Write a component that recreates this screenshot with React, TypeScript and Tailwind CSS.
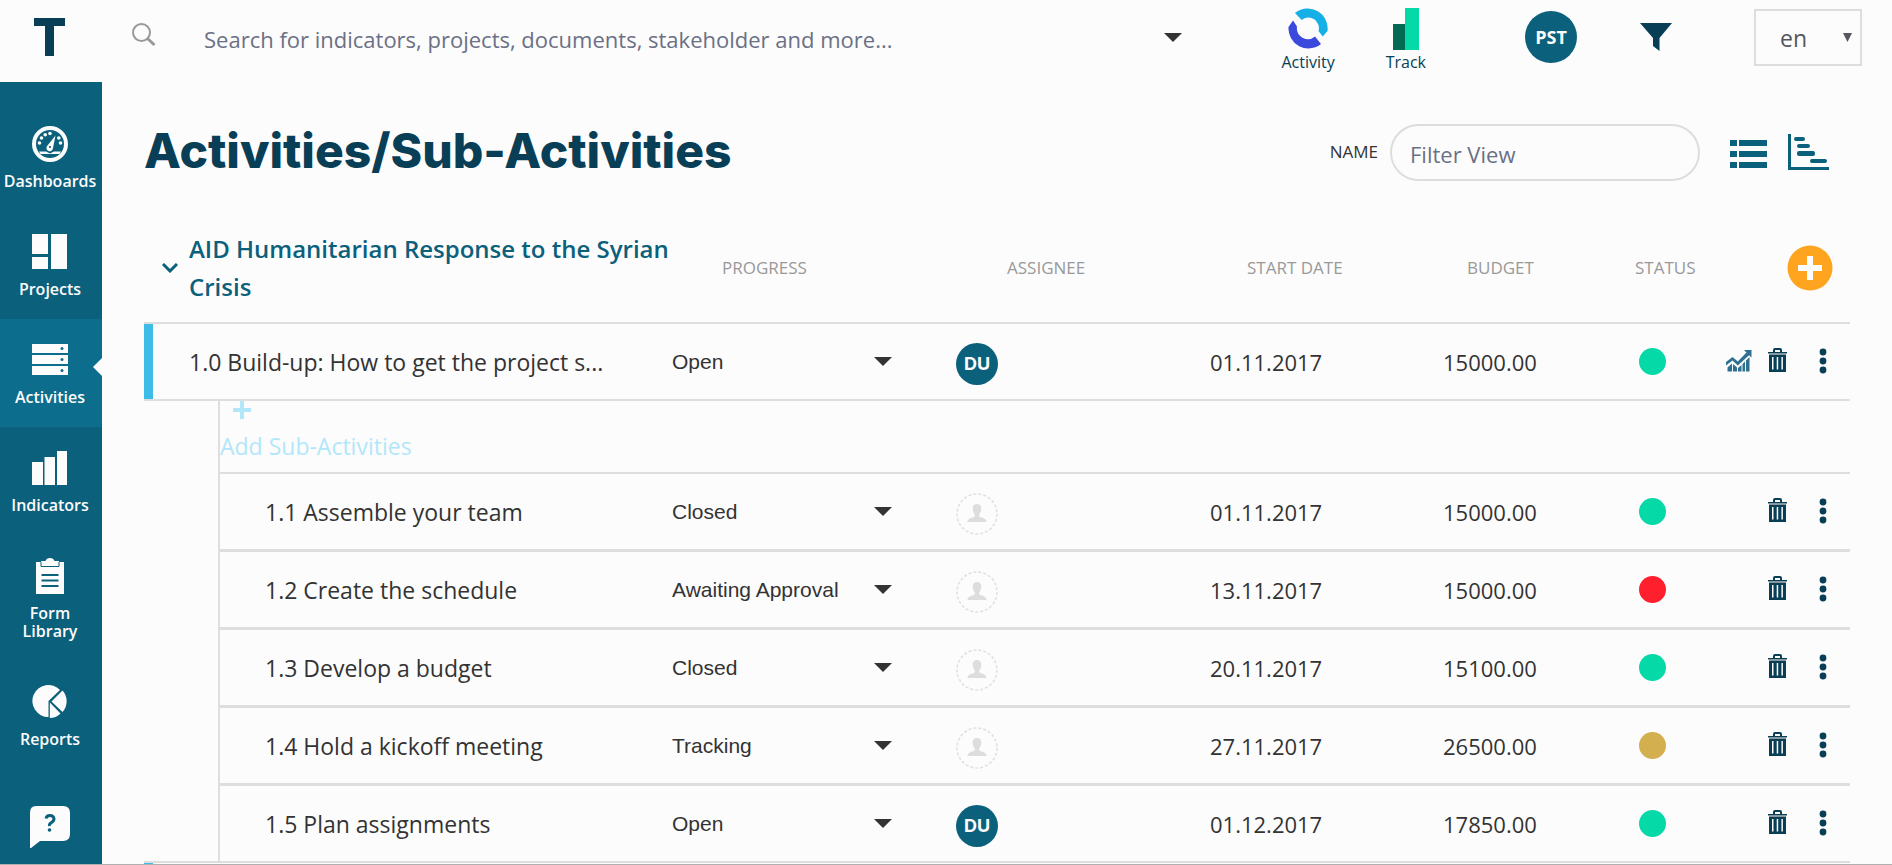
import React, { useState } from "react";

type Status = "green" | "red" | "gold";

interface Activity {
  name: string;
  progress: string;
  assignee?: string;
  date: string;
  budget: string;
  status: Status;
}

const main: Activity = {
  name: "1.0 Build-up: How to get the project s...",
  progress: "Open",
  assignee: "DU",
  date: "01.11.2017",
  budget: "15000.00",
  status: "green",
};

const subActivities: Activity[] = [
  { name: "1.1 Assemble your team", progress: "Closed", date: "01.11.2017", budget: "15000.00", status: "green" },
  { name: "1.2 Create the schedule", progress: "Awaiting Approval", date: "13.11.2017", budget: "15000.00", status: "red" },
  { name: "1.3 Develop a budget", progress: "Closed", date: "20.11.2017", budget: "15100.00", status: "green" },
  { name: "1.4 Hold a kickoff meeting", progress: "Tracking", date: "27.11.2017", budget: "26500.00", status: "gold" },
  { name: "1.5 Plan assignments", progress: "Open", assignee: "DU", date: "01.12.2017", budget: "17850.00", status: "green" },
];

const progressOptions = ["Open", "Awaiting Approval", "Tracking", "Closed"];

const statusColor: Record<Status, string> = {
  green: "bg-[#05d9a7]",
  red: "bg-[#ff1f2d]",
  gold: "bg-[#d3af50]",
};

const nav = [
  {
    label: "Dashboards",
    icon: (
      <svg width="36" height="36" viewBox="0 0 36 36">
        <circle cx="18" cy="18" r="16" fill="none" stroke="#fcfcfc" strokeWidth="4" />
        <g fill="#fcfcfc">
          <circle cx="7.5" cy="17" r="1.8" />
          <circle cx="9.5" cy="12" r="1.8" />
          <circle cx="13.2" cy="8.8" r="1.8" />
          <circle cx="18" cy="7.5" r="1.8" />
          <circle cx="26.8" cy="12" r="1.8" />
          <circle cx="28.5" cy="17" r="1.8" />
          <path d="M23.5 9.5 L21 22 A3.3 3.3 0 1 1 15.5 19.5 Z" />
          <path d="M7 25.5 H14 L18 27.5 L22 25.5 H29 L27.5 28 H8.5 Z" />
        </g>
        <circle cx="18" cy="21" r="1.1" fill="#0b607c" />
      </svg>
    ),
  },
  {
    label: "Projects",
    icon: (
      <svg width="36" height="36" viewBox="0 0 36 36" fill="#fcfcfc">
        <path d="M0 0H16V20H0zM0 23H16V35H0zM19 0H35V35H19z" />
      </svg>
    ),
  },
  {
    label: "Activities",
    icon: (
      <svg width="36" height="36" viewBox="0 0 36 36">
        <path d="M0 2H36V11H0zM0 13H36V22H0zM0 24H36V33H0z" fill="#fcfcfc" />
        <g fill="#0c6d8d">
          <circle cx="30" cy="6.5" r="1.5" />
          <circle cx="30" cy="17.5" r="1.5" />
          <circle cx="30" cy="28.5" r="1.5" />
        </g>
      </svg>
    ),
  },
  {
    label: "Indicators",
    icon: (
      <svg width="36" height="36" viewBox="0 0 36 36" fill="#fcfcfc">
        <path d="M0 12H11V35H0zM12.5 7H23V35H12.5zM25 1H35V35H25z" />
      </svg>
    ),
  },
  {
    label: "Form Library",
    icon: (
      <svg width="36" height="36" viewBox="0 0 36 36">
        <path d="M4 4H32V36H4z" fill="#fcfcfc" />
        <path d="M9 3H13.5Q14.5 0 18 0T22.5 3H27V9H9z" fill="#fcfcfc" />
        <path d="M9 4V8.5H27V4" fill="none" stroke="#0b607c" strokeWidth="1" />
        <path d="M9.5 17H26.5M9.5 22.5H26.5M9.5 28H26.5" stroke="#0b607c" strokeWidth="2" />
      </svg>
    ),
  },
  {
    label: "Reports",
    icon: (
      <svg width="36" height="36" viewBox="0 0 36 36" fill="#fcfcfc">
        <path d="M16.5 17V33A16 16 0 1 1 28 6z" />
        <path d="M19.5 17.5L30.5 6.5A16 16 0 0 1 30.5 28z" />
        <path d="M17.8 18.5L28.5 29.5Q24 34 17.8 34z" />
      </svg>
    ),
  },
];

function Caret() {
  return (
    <svg width="18" height="9" viewBox="0 0 18 9" className="pointer-events-none shrink-0">
      <path d="M0 0H18L9 9z" fill="#333" />
    </svg>
  );
}

function Avatar({ initials }: { initials?: string }) {
  if (initials) {
    return (
      <span className="mt-1 flex size-[42px] items-center justify-center rounded-full bg-[#0b607c] font-['Inter',sans-serif] text-[18px] font-bold text-[#fcfcfc]">
        {initials}
      </span>
    );
  }
  return (
    <span className="mt-1 flex size-[42px] items-center justify-center">
      <svg width="42" height="42" viewBox="0 0 42 42" fill="#dcdedd">
        <circle cx="21" cy="21" r="20" fill="none" stroke="#dfe1e0" strokeWidth="1.6" strokeDasharray="3 2" />
        <g transform="translate(11 10)">
          <path d="M10 1C13 1 14.5 3.2 14.3 6.2C14.1 9 13 10.5 12.3 11.2V13.5C15 15 19.5 15 19.5 19H.5C.5 15 5 15 7.7 13.5V11.2C7 10.5 5.9 9 5.7 6.2C5.5 3.2 7 1 10 1z" />
        </g>
      </svg>
    </span>
  );
}

function TrendIcon() {
  return (
    <svg width="26" height="26" viewBox="0 0 26 26">
      <g fill="#2f7091">
        <path d="M1.5 19.5L6 15.5V23.5H1.5zM7 16L11 19.5V23.5H7zM12 20L15.5 17V23.5H12zM16.5 16L19 13.5V23.5H16.5zM20 12.5L23.5 9V23.5H20z" />
        <path d="M18 2H25.5V9.5L23 7.2L11.800 17.5L6.5 12.5L0 17.5V14L6.5 9L11.8 13.5L20.5 4.500z" />
      </g>
    </svg>
  );
}

function TrashIcon() {
  return (
    <svg width="20" height="26" viewBox="0 0 20 26">
      <path d="M6 4V2Q6 1 7 1H12Q13 1 13 2V4" fill="none" stroke="#083f56" strokeWidth="2" />
      <path d="M0 4H19V5.5H0z" fill="#083f56" />
      <path d="M1 5.5H18V7H1z" fill="#8b979c" />
      <path d="M1 7H18V24H1z" fill="#083f56" />
      <path d="M4 9H5.5V21.5H4zM8.7 9H10.2V21.5H8.7zM13.4 9H14.9V21.5H13.4z" fill="#fcfcfc" />
    </svg>
  );
}

function Row({ item, sub }: { item: Activity; sub?: boolean }) {
  const [progress, setProgress] = useState(item.progress);
  return (
    <>
      <span className={sub ? "w-[452px] shrink-0 pt-[2px] pl-[45px]" : "w-[519px] shrink-0 pt-[2px] pl-9"}>{item.name}</span>
      <label className="relative flex w-[220px] shrink-0 items-center">
        <select
          aria-label={`Progress of ${item.name}`}
          value={progress}
          onChange={(e) => setProgress(e.target.value)}
          className="w-full appearance-none bg-transparent font-['Liberation_Sans',sans-serif] text-[21px] leading-6 outline-none"
        >
          {progressOptions.map((o) => (
            <option key={o}>{o}</option>
          ))}
        </select>
        <span className="pointer-events-none absolute right-0">
          <svg width="18" height="9" viewBox="0 0 18 9" className="block">
            <path d="M0 0H18L9 9z" fill="#333" />
          </svg>
        </span>
      </label>
      <span className="min-w-0 flex-1 pl-16">
        <Avatar initials={item.assignee} />
      </span>
      <span className="w-[233px] shrink-0 pt-[2px] text-[22px]">{item.date}</span>
      <span className="w-[196px] shrink-0 pt-[2px] text-[22px]">{item.budget}</span>
      <span className="w-[87px] shrink-0">
        <span className={`block size-[27px] rounded-full ${statusColor[item.status]}`} />
      </span>
      <span className="flex w-[124px] shrink-0 items-center pb-[2px]">
        <span className="w-[42px]">
          {!sub && (
            <button type="button" aria-label="Show trend" className="block">
              <TrendIcon />
            </button>
          )}
        </span>
        <button type="button" aria-label="Delete" className="block w-[51px]">
          <TrashIcon />
        </button>
        <button type="button" aria-label="More" className="block">
          <svg width="8" height="26" viewBox="0 0 8 26" fill="#083f56">
            <circle cx="4" cy="4" r="3.4" />
            <circle cx="4" cy="13" r="3.4" />
            <circle cx="4" cy="22" r="3.4" />
          </svg>
        </button>
      </span>
    </>
  );
}

export default function App() {
  return (
    <div className="flex h-screen flex-col overflow-hidden border-b border-[#b0b0b0] bg-[#fcfcfc] font-['Open_Sans','Noto_Sans',sans-serif] text-[23px] text-[#333]">
      <header className="flex h-[82px] shrink-0 items-center pr-[30px]">
        <a href="#home" aria-label="Home" className="flex w-[102px] justify-center pr-1 pb-2">
          <svg width="32" height="38" viewBox="0 0 32 38" fill="#083f56">
            <path d="M1 0H32V8H21V38H12V8H1z" />
          </svg>
        </a>
        <label htmlFor="search" className="ml-[30px] pb-3">
          <svg width="24" height="24" viewBox="0 0 24 24" fill="none" stroke="#999">
            <circle cx="9.5" cy="9.5" r="8.5" strokeWidth="2" />
            <path d="M15.5 15.5L22.5 22" strokeWidth="3" />
          </svg>
        </label>
        <input
          id="search"
          placeholder="Search for indicators, projects, documents, stakeholder and more..."
          className="ml-12 min-w-0 flex-1 bg-transparent pb-1 text-[22px] outline-none placeholder:text-[#6b7086]"
        />
        <button type="button" aria-label="Search options" className="mb-2">
          <Caret />
        </button>
        <nav className="ml-[99px] flex gap-[51px] text-[16px] leading-5 text-[#083f56]">
          <a href="#activity" className="flex flex-col items-center gap-[2px] pb-[2px]">
            <svg width="40" height="42" viewBox="0 0 40 42">
              <path d="M7 5A20 20 0 0 1 39.5 23L34.7 28.5L30.5 23A10.5 10.5 0 0 0 13.7 12z" fill="#14b0e6" />
              <path d="M5 12.5L9 18.5A11 11 0 0 0 27 28.5L33 36A20 20 0 0 1 .5 19z" fill="#3c49dd" />
            </svg>
            Activity
          </a>
          <a href="#track" className="flex flex-col items-center gap-[2px] pb-[2px]">
            <svg width="26" height="42" viewBox="0 0 26 42">
              <path d="M0 16H13V42H0z" fill="#036b54" />
              <path d="M12 0H26V42H12z" fill="#05d9a7" />
            </svg>
            Track
          </a>
        </nav>
        <button type="button" className="mb-2 ml-[99px] flex size-[52px] items-center justify-center rounded-full bg-[#0b607c] text-[18px] font-bold text-[#fcfcfc]">
          PST
        </button>
        <button type="button" aria-label="Filter" className="mb-2 ml-[63px]">
          <svg width="32" height="30" viewBox="0 0 32 30" fill="#083f56">
            <path d="M0 1H32L19.5 16V29L13 24V16z" />
          </svg>
        </button>
        <label className="relative mb-2 ml-[82px] flex items-center">
          <select aria-label="Language" defaultValue="en" className="h-[57px] w-[108px] appearance-none border-2 border-[#dcdedd] pt-[2px] pl-6 text-[#55565f] outline-none">
            <option>en</option>
            <option>fr</option>
          </select>
          <svg width="9" height="9" viewBox="0 0 9 9" className="pointer-events-none absolute right-[10px]">
            <path d="M0 0H9L4.5 9z" fill="#55565f" />
          </svg>
        </label>
      </header>

      <div className="flex min-h-0 flex-1">
        <nav className="flex w-[102px] shrink-0 flex-col items-center bg-[#0b607c] pt-[21px] text-[16px] leading-[18px] font-semibold text-[#fcfcfc]">
          {nav.map((n) => (
            <a
              key={n.label}
              href={`#${n.label}`}
              className={`relative flex min-h-[108px] w-full flex-col items-center gap-[10px] pt-[23px] pr-[18px] pl-4 text-center ${
                n.label === "Activities" ? "bg-[#0c6d8d]" : ""
              } ${n.label === "Form Library" ? "pb-[21px]" : ""}`}
            >
              {n.icon}
              {n.label}
              {n.label === "Activities" && (
                <svg width="9" height="18" viewBox="0 0 9 18" className="absolute top-[39px] right-0">
                  <path d="M9 0V18L0 9z" fill="#fcfcfc" />
                </svg>
              )}
            </a>
          ))}
          <button type="button" aria-label="Help" className="mt-9 mr-[2px]">
            <svg width="42" height="44" viewBox="0 0 42 44">
              <path d="M7 1H34Q41 1 41 8V29Q41 36 34 36H11L2 43H1V8Q1 1 7 1z" fill="#fcfcfc" />
              <path d="M17 13.5Q17.5 10.5 21 10.5T25 13.8Q25 16 22.5 17.5T20.5 21" fill="none" stroke="#0b607c" strokeWidth="3" />
              <circle cx="20.5" cy="25" r="1.8" fill="#0b607c" />
            </svg>
          </button>
        </nav>

        <main className="min-w-0 flex-1 pr-[42px] pl-[42px]">
          <div className="flex h-[140px] items-center pr-5">
            <h1 className="flex-1 pb-[2px] font-['Inter',sans-serif] text-[48px] leading-[56px] font-extrabold text-[#083f56]">Activities/Sub-Activities</h1>
            <label htmlFor="filter" className="mr-3 text-[17px]">
              NAME
            </label>
            <input
              id="filter"
              placeholder="Filter View"
              className="h-[57px] w-[310px] rounded-full border-2 border-[#dcdedd] bg-transparent px-[18px] pt-[3px] text-[22px] outline-none placeholder:text-[#6b7086]"
            />
            <button type="button" aria-label="List view" className="mt-[3px] ml-[30px]">
              <svg width="38" height="30" viewBox="0 0 38 30" fill="#0b607c">
                <path d="M0 1H7V7H0zM9 1H37V7H9zM0 12H7V18H0zM9 12H37V18H9zM0 23H7V29H0zM9 23H37V29H9z" />
              </svg>
            </button>
            <button type="button" aria-label="Gantt view" className="ml-5">
              <svg width="42" height="36" viewBox="0 0 42 36" fill="#0b607c">
                <path d="M0 0H3V33H41V36H0z" />
                <rect x="6" y="3" width="11" height="4" rx="2" />
                <rect x="9" y="10" width="13" height="4" rx="2" />
                <rect x="9" y="17" width="18" height="5" rx="2" />
                <rect x="22" y="25" width="17" height="4" rx="2" />
              </svg>
            </button>
          </div>

          <section>
            <div className="flex h-[100px] items-center pb-2 text-[17px] text-[#999]">
              <div className="flex w-[578px] shrink-0 items-center gap-[11px] pl-[18px]">
                <button type="button" aria-label="Collapse">
                  <svg width="16" height="10" viewBox="0 0 16 10" fill="none" stroke="#0b607c" strokeWidth="3">
                    <path d="M1 1L8 8L15 1" />
                  </svg>
                </button>
                <h2 className="w-[500px] text-[24px] leading-[38px] font-semibold text-[#0b607c]">AID Humanitarian Response to the Syrian Crisis</h2>
              </div>
              <span className="w-[285px] shrink-0">PROGRESS</span>
              <span className="min-w-0 flex-1">ASSIGNEE</span>
              <span className="w-[220px] shrink-0">START DATE</span>
              <span className="w-[168px] shrink-0">BUDGET</span>
              <span className="w-[152px] shrink-0">STATUS</span>
              <button type="button" aria-label="Add activity" className="mr-[17px]">
                <svg width="46" height="46" viewBox="0 0 46 46">
                  <circle cx="23" cy="23" r="22.5" fill="#ffa41f" />
                  <path d="M20 11H26V20H35V26H26V35H20V26H11V20H20z" fill="#fcfcfc" />
                </svg>
              </button>
            </div>

            <div className="flex h-[79px] items-center border-y-2 border-[#dedede]">
              <div className="h-full w-[9px] shrink-0 bg-[#3dbce7]" />
              <Row item={main} />
            </div>

            <div className="ml-[74px] border-l-2 border-[#dedede]">
              <button type="button" className="flex h-[71px] w-full flex-col items-start text-left text-[#b2e7fa]">
                <svg width="18" height="18" viewBox="0 0 18 18" fill="#b2e7fa" className="ml-[13px] shrink-0">
                  <path d="M7 0H11V7H18V11H11V18H7V11H0V7H7z" />
                </svg>
                <span className="mt-[7px] leading-10">Add Sub-Activities</span>
              </button>
              {subActivities.map((item, i) => (
                <div key={item.name} className={`flex items-center border-[#dedede] ${i === 0 ? "h-[77px] border-t-2" : "h-[78px] border-t-3"}`}>
                  <Row item={item} sub />
                </div>
              ))}
            </div>
            <div className="h-3 border-t-2 border-[#dedede]">
              <div className="h-full w-[9px] bg-[#3dbce7]" />
            </div>
          </section>
        </main>
      </div>
    </div>
  );
}
